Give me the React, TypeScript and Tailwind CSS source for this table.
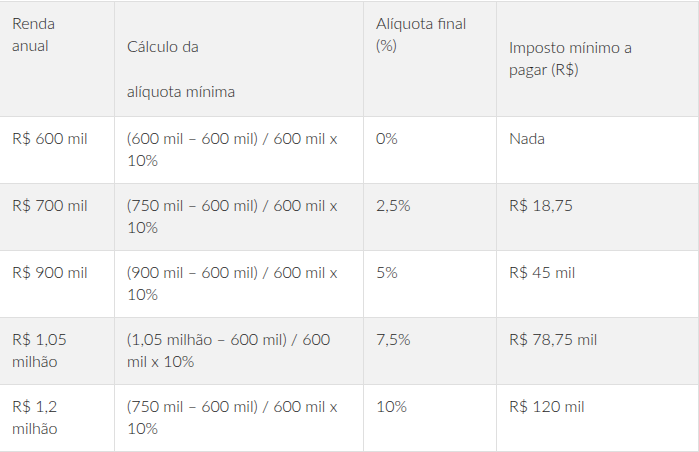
import React from "react";

const rows: { a: React.ReactNode; b: React.ReactNode; c: string; d: string }[] = [
  { a: "R$ 600 mil", b: <>(600 mil – 600 mil) / 600 mil x<br />10%</>, c: "0%", d: "Nada" },
  { a: "R$ 700 mil", b: <>(750 mil – 600 mil) / 600 mil x<br />10%</>, c: "2,5%", d: "R$ 18,75" },
  { a: "R$ 900 mil", b: <>(900 mil – 600 mil) / 600 mil x<br />10%</>, c: "5%", d: "R$ 45 mil" },
  { a: <>R$ 1,05<br />milhão</>, b: <>(1,05 milhão – 600 mil) / 600<br />mil x 10%</>, c: "7,5%", d: "R$ 78,75 mil" },
  { a: <>R$ 1,2<br />milhão</>, b: <>(750 mil – 600 mil) / 600 mil x<br />10%</>, c: "10%", d: "R$ 120 mil" },
];

const cell = "border-r border-b border-[#dfdfdf] pl-[12px] pr-[4px] pt-[10px] whitespace-nowrap";

export default function App() {
  return (
    <div
      className="w-[699px] h-[452px] bg-white pt-px text-[16px] leading-[22px] text-[#1e1e1e] font-light"
      style={{ fontFamily: "Lato, 'Open Sans', sans-serif" }}
    >
      <div className="grid grid-cols-[115px_249px_133px_202px] border-t border-[#dfdfdf]">
        <div className={`${cell} h-[115px] bg-[#f2f2f2]`}>Renda<br />anual</div>
        <div className={`${cell} h-[115px] bg-[#f2f2f2]`}>
          <p className="mt-[23px]">Cálculo da</p>
          <p className="mt-[23px]">alíquota mínima</p>
        </div>
        <div className={`${cell} h-[115px] bg-[#f2f2f2]`}>Alíquota final<br />(%)</div>
        <div className={`${cell} h-[115px] bg-[#f2f2f2]`}>
          <p className="mt-[24px]">Imposto mínimo a<br />pagar (R$)</p>
        </div>
        {rows.map((r, i) => {
          const bg = i % 2 === 0 ? "bg-white" : "bg-[#f2f2f2]";
          return (
            <React.Fragment key={i}>
              <div className={`${cell} h-[67px] ${bg}`}>{r.a}</div>
              <div className={`${cell} h-[67px] ${bg}`}>{r.b}</div>
              <div className={`${cell} h-[67px] ${bg}`}>{r.c}</div>
              <div className={`${cell} h-[67px] ${bg}`}>{r.d}</div>
            </React.Fragment>
          );
        })}
      </div>
    </div>
  );
}
